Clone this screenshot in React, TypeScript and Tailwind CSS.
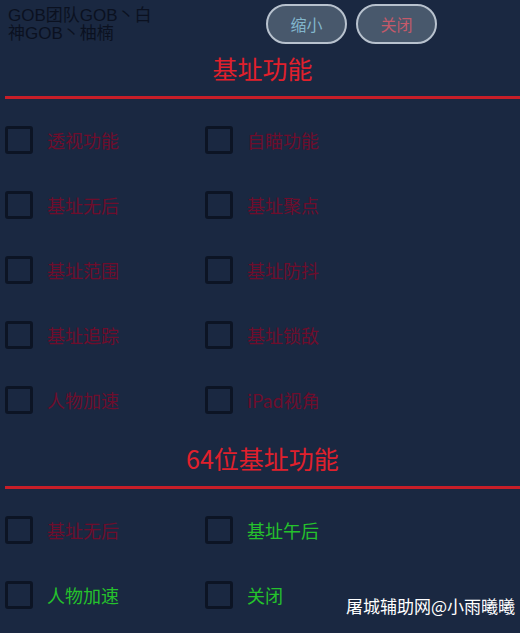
import React from "react";

const FONT = { fontFamily: '"Noto Sans CJK SC", "Noto Sans", sans-serif' };

type Item = { label: string; on?: boolean };

const BASE: Item[] = [
  { label: "透视功能" },
  { label: "自瞄功能" },
  { label: "基址无后" },
  { label: "基址聚点" },
  { label: "基址范围" },
  { label: "基址防抖" },
  { label: "基址追踪" },
  { label: "基址锁敌" },
  { label: "人物加速" },
  { label: "iPad视角" },
];

const BASE64: Item[] = [
  { label: "基址无后" },
  { label: "基址午后", on: true },
  { label: "人物加速", on: true },
  { label: "关闭", on: true },
];

function Check({ item }: { item: Item }) {
  return (
    <div className="flex h-[65px] items-center">
      <div className="h-[28px] w-[28px] rounded-[3px] border-[3px] border-[#0c1424]" />
      <span
        className={`ml-[14px] text-[18px] leading-none ${
          item.on ? "text-[#25c22c]" : "text-[#6e0d2c]"
        }`}
      >
        {item.label}
      </span>
    </div>
  );
}

function Section({ title, items }: { title: string; items: Item[] }) {
  return (
    <>
      <h2 className="text-center text-[25px] leading-[28px] text-[#e0202c]">{title}</h2>
      <div className="mt-[14px] h-[3px] bg-[#c81e28]" />
      <div className="mt-[8px] grid grid-cols-[200px_1fr]">
        {items.map((it, i) => (
          <Check key={i} item={it} />
        ))}
      </div>
    </>
  );
}

export default function App() {
  return (
    <div className="relative h-[633px] w-[520px] overflow-hidden bg-[#1a2841] pl-[5px]" style={FONT}>
      {/* top bar: credits + window buttons */}
      <div className="flex h-[48px] items-start">
        <p
          className="mt-[7px] ml-[3px] w-[156px] text-[17px] leading-[18px] text-[#0b1120]"
          style={{ fontFamily: '"Liberation Sans", "Noto Sans CJK SC", sans-serif' }}
        >
          GOB团队GOB丶白神GOB丶柚楠
        </p>
        <div className="mt-[4px] ml-[102px] flex gap-[9px]">
          <button className="h-[40px] w-[81px] rounded-full border-2 border-[#b8c2ce] bg-[#48586c] text-[16px] text-[#82b6cc]">
            缩小
          </button>
          <button className="h-[40px] w-[81px] rounded-full border-2 border-[#b8c2ce] bg-[#48586c] text-[16px] text-[#c45a6a]">
            关闭
          </button>
        </div>
      </div>

      <div className="mt-[6px]">
        <Section title="基址功能" items={BASE} />
      </div>
      <div className="mt-[12px]">
        <Section title="64位基址功能" items={BASE64} />
      </div>

      <span className="absolute right-[5px] bottom-[19px] text-[17px] leading-none text-white">
        屠城辅助网@小雨曦曦
      </span>
    </div>
  );
}
